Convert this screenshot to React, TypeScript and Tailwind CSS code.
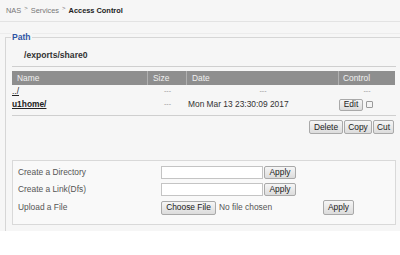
const btn =
  "flex items-center justify-center h-full border border-[#a9a9a9] rounded-[2px] bg-gradient-to-b from-[#f6f6f6] to-[#dcdcdc] text-[#222] text-[8.4px] leading-none";

export default function App() {
  return (
    <div
      className="w-[400px] h-[255px] bg-white overflow-hidden"
      style={{ fontFamily: '"Liberation Sans", Arial, sans-serif' }}
    >
      <div className="h-[231px] bg-[#f6f6f6]">
        {/* Breadcrumb */}
        <div className="h-[22px] flex items-center pl-[6px] border-b border-[#e3e3e3] text-[7.4px] text-[#777]">
          <span>NAS</span>
          <span className="mx-[3px] text-[6px] -translate-y-[2px]">&gt;</span>
          <span>Services</span>
          <span className="mx-[3px] text-[6px] -translate-y-[2px]">&gt;</span>
          <span className="font-bold text-[#222]">Access Control</span>
        </div>
        <div className="h-[12px] border-b border-[#ececec]" />

        {/* Path fieldset */}
        <div className="relative ml-[5px] mt-[3px] h-[194px] border-t border-l border-[#d6d6d6]">
          <div className="absolute left-[5px] -top-[7px] px-[1px] bg-[#f6f6f6] text-[8.6px] font-bold text-[#2f55a4] leading-[12px]">
            Path
          </div>

          <div className="pl-[6px] w-[390px]">
            <div className="h-[29px] pt-[12px] pl-[12px] border-b border-[#cfcfcf] text-[8.6px] font-bold text-[#333] leading-[11px]">
              /exports/share0
            </div>

            {/* Table */}
            <div className="mt-[4px] grid grid-cols-[136px_39px_152px_56px] text-[8.4px]">
              <div className="h-[14px] bg-[#8e8e8e] text-[#f0f0f0] pl-[5px] flex items-center border-r border-[#b0b0b0]">Name</div>
              <div className="h-[14px] bg-[#8e8e8e] text-[#f0f0f0] pl-[5px] flex items-center border-r border-[#b0b0b0]">Size</div>
              <div className="h-[14px] bg-[#8e8e8e] text-[#f0f0f0] pl-[5px] flex items-center border-r border-[#b0b0b0]">Date</div>
              <div className="h-[14px] bg-[#8e8e8e] text-[#f0f0f0] pl-[4px] flex items-center">Control</div>

              <div className="h-[13px] flex items-center text-[#222] underline">../</div>
              <div className="h-[13px] flex items-center justify-center text-[#999] text-[7px]">---</div>
              <div className="h-[13px] flex items-center justify-center text-[#999] text-[7px]">---</div>
              <div className="h-[13px] flex items-center justify-center text-[#999] text-[7px]">---</div>

              <div className="h-[13px] flex items-center font-bold text-[#222] underline">u1home/</div>
              <div className="h-[13px] flex items-center justify-center text-[#999] text-[7px]">---</div>
              <div className="h-[13px] flex items-center pl-[1px] text-[#333]">Mon Mar 13 23:30:09 2017</div>
              <div className="h-[13px] flex items-center">
                <div className="w-[24px] h-[12px]">
                  <div className={btn}>Edit</div>
                </div>
                <div className="ml-[3px] w-[7px] h-[7px] border border-[#9a9a9a] rounded-[1px] bg-[#f4f4f4]" />
              </div>
            </div>
            <div className="h-[5px] border-b border-[#cfcfcf]" />

            {/* Actions */}
            <div className="mt-[4px] h-[14px] flex justify-end pr-[2px] gap-[1px]">
              <div className="w-[34px] h-full"><div className={btn}>Delete</div></div>
              <div className="w-[28px] h-full"><div className={btn}>Copy</div></div>
              <div className="w-[21px] h-full"><div className={btn}>Cut</div></div>
            </div>

            {/* Create / upload box */}
            <div className="mt-[26px] h-[65px] border border-[#d9d9d9] bg-[#f9f9f9] pt-[5px] pl-[5px] flex flex-col gap-[4px] text-[8.4px] text-[#555]">
              <div className="h-[13px] flex items-center">
                <div className="w-[143px]">Create a Directory</div>
                <div className="w-[102px] h-full bg-white border border-[#c4c4c4]" />
                <div className="ml-[1px] w-[32px] h-full"><div className={btn}>Apply</div></div>
              </div>
              <div className="h-[13px] flex items-center">
                <div className="w-[143px]">Create a Link(Dfs)</div>
                <div className="w-[102px] h-full bg-white border border-[#c4c4c4]" />
                <div className="ml-[1px] w-[32px] h-full"><div className={btn}>Apply</div></div>
              </div>
              <div className="h-[15px] flex items-center">
                <div className="w-[143px]">Upload a File</div>
                <div className="w-[55px] h-[14px]"><div className={btn}>Choose File</div></div>
                <span className="ml-[3px] w-[104px] text-[#555]">No file chosen</span>
                <div className="w-[31px] h-[15px]"><div className={btn}>Apply</div></div>
              </div>
            </div>
          </div>
        </div>
      </div>
    </div>
  );
}
